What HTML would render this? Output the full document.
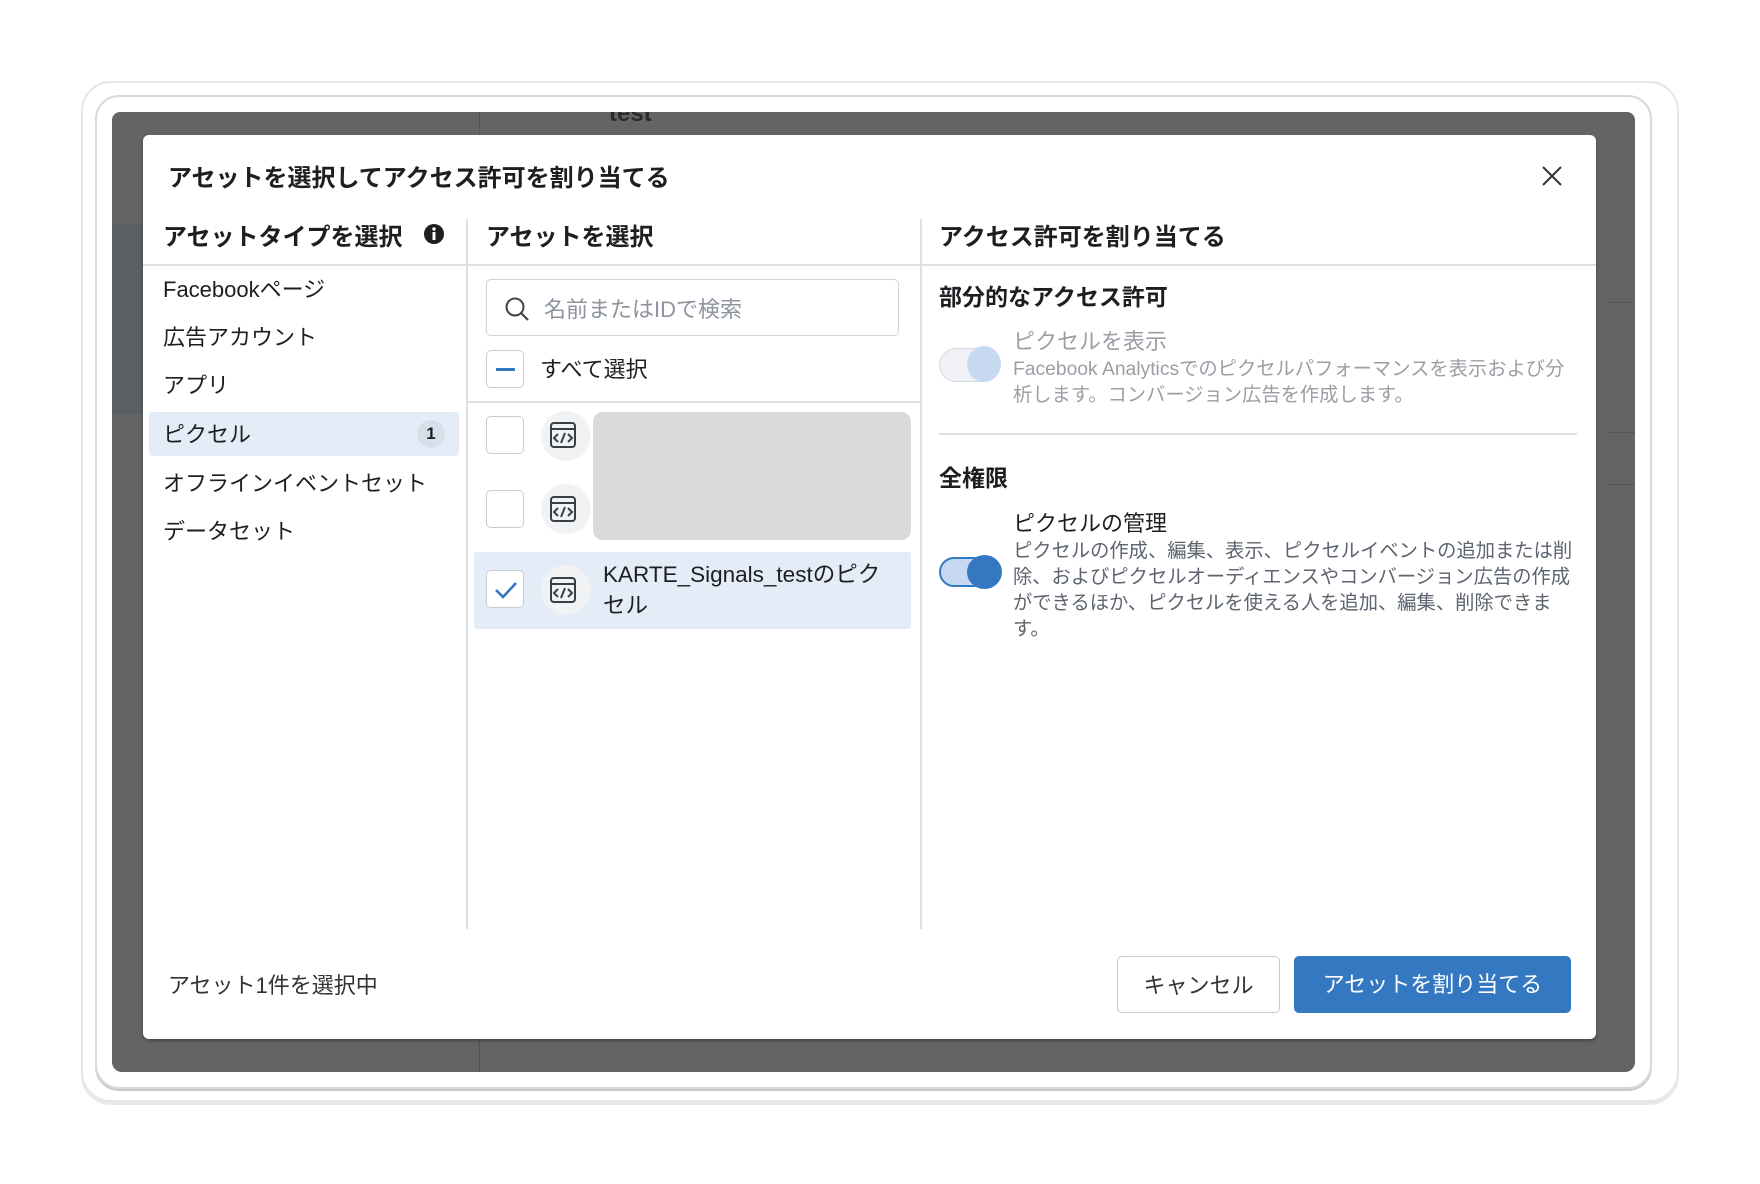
<!DOCTYPE html>
<html><head><meta charset="utf-8"><style>
*{box-sizing:border-box;margin:0;padding:0}
body{width:1760px;height:1184px;background:#fff;position:relative;overflow:hidden;font-family:"Liberation Sans","Noto Sans CJK JP",sans-serif;color:#1c1e21}
.a{position:absolute}
.f1{left:81px;top:81px;width:1598px;height:1021px;border:2px solid #e6e6e6;border-radius:30px;box-shadow:0 3px 0 #e8e8e8}
.f2{left:95px;top:95px;width:1557px;height:994px;border:2px solid #d8d8d8;border-radius:24px;box-shadow:0 2px 0 #c8c8c8}
.bd{left:112px;top:112px;width:1523px;height:960px;background:#646464;border-radius:8px 8px 10px 10px;overflow:hidden}
.modal{left:143px;top:135px;width:1453px;height:904px;background:#fff;border-radius:6px;box-shadow:0 2px 3px rgba(0,0,0,.3)}
.t{position:absolute;white-space:nowrap}
.h{font-weight:bold;font-size:24px}
.li{font-size:22px;left:20px}
.cb{position:absolute;width:38px;height:38px;border:1.5px solid #c9ccd1;border-radius:5px;background:#fff}
.ic{position:absolute;width:50px;height:50px;border-radius:50%;background:#f1f2f4}
.gray{color:#9a9ea5}
.d{font-size:19.3px;line-height:26px}
</style></head><body>
<div class="a f1"></div>
<div class="a f2"></div>
<div class="a bd">
  <div class="a" style="left:367px;top:0;width:1px;height:960px;background:#555"></div>
  <div class="a" style="left:0;top:112px;width:30px;height:190px;background:#5b5e63"></div>
  <div class="a" style="left:1495px;top:190px;width:28px;height:1px;background:#555"></div>
  <div class="a" style="left:1495px;top:320px;width:28px;height:1px;background:#555"></div>
  <div class="a" style="left:1495px;top:372px;width:28px;height:1px;background:#555"></div>
  <div class="t" style="left:497px;top:-12px;font-size:24px;font-weight:bold;color:#2a2a2a">test</div>
</div>
<div class="a modal">
  <div class="t h" style="left:25px;top:23px">アセットを選択してアクセス許可を割り当てる</div>
  <svg class="a" style="left:1397px;top:29px" width="24" height="24" viewBox="0 0 24 24"><path d="M3 3L21 21M21 3L3 21" stroke="#333" stroke-width="2" fill="none"/></svg>
  <div class="t h" style="left:20px;top:82px;font-size:24px">アセットタイプを選択</div>
  <svg class="a" style="left:281px;top:89px" width="20" height="20" viewBox="0 0 20 20"><circle cx="10" cy="10" r="10" fill="#1c1e21"/><rect x="8.5" y="8" width="3" height="8" fill="#fff"/><circle cx="10" cy="5" r="1.7" fill="#fff"/></svg>
  <div class="t h" style="left:343px;top:82px;font-size:24px">アセットを選択</div>
  <div class="t h" style="left:796px;top:82px;font-size:24px">アクセス許可を割り当てる</div>
  <div class="a" style="left:0;top:129px;width:1453px;height:2px;background:#dde0e5"></div>
  <div class="a" style="left:323px;top:84px;width:1.5px;height:710px;background:#dde0e5"></div>
  <div class="a" style="left:777px;top:84px;width:1.5px;height:710px;background:#dde0e5"></div>
  <div class="t li" style="top:137px">Facebookページ</div>
  <div class="t li" style="top:185px">広告アカウント</div>
  <div class="t li" style="top:233px">アプリ</div>
  <div class="a" style="left:6px;top:277px;width:310px;height:44px;background:#e4edf7;border-radius:4px"></div>
  <div class="t li" style="top:282px">ピクセル</div>
  <div class="a" style="left:274px;top:285px;width:28px;height:28px;border-radius:50%;background:#d6dfea;font-size:17px;font-weight:bold;text-align:center;line-height:28px">1</div>
  <div class="t li" style="top:331px">オフラインイベントセット</div>
  <div class="t li" style="top:379px">データセット</div>
  <div class="a" style="left:343px;top:144px;width:413px;height:57px;border:1.5px solid #cfd2d6;border-radius:5px"></div>
  <svg class="a" style="left:361px;top:161px" width="26" height="26" viewBox="0 0 26 26"><circle cx="11" cy="11" r="8.5" stroke="#444" stroke-width="2" fill="none"/><path d="M17 17L24 24" stroke="#444" stroke-width="2.2"/></svg>
  <div class="t" style="left:401px;top:157px;font-size:22px;color:#8d949e">名前またはIDで検索</div>
  <div class="cb" style="left:343px;top:215px"></div>
  <div class="a" style="left:353px;top:233px;width:19px;height:3px;background:#3578c2"></div>
  <div class="t" style="left:397px;top:217px;font-size:22px">すべて選択</div>
  <div class="a" style="left:323px;top:266px;width:455px;height:2px;background:#dde0e5"></div>
  <div class="cb" style="left:343px;top:281px"></div>
  <div class="ic" style="left:398px;top:276px"></div>
  <div class="cb" style="left:343px;top:355px"></div>
  <div class="ic" style="left:398px;top:349px"></div>
  <div class="a" style="left:450px;top:277px;width:318px;height:128px;background:#d9d9d9;border-radius:10px"></div>
  <div class="a" style="left:331px;top:417px;width:437px;height:77px;background:#e4edf7;border-radius:3px"></div>
  <div class="cb" style="left:343px;top:435px"></div>
  <svg class="a" style="left:351px;top:445px" width="24" height="20" viewBox="0 0 24 20"><path d="M2 10L9 17L22 3" stroke="#3578c2" stroke-width="2.6" fill="none"/></svg>
  <div class="ic" style="left:398px;top:430px"></div>
  <div class="t" style="left:460px;top:424px;font-size:22.5px;line-height:31px">KARTE_Signals_testのピク<br>セル</div>
  <div class="t h" style="left:796px;top:143px;font-size:23px">部分的なアクセス許可</div>
  <div class="a" style="left:796px;top:213px;width:61px;height:34px;border-radius:17px;background:#eff1f4;border:1.5px solid #d6dae0"></div>
  <div class="a" style="left:824px;top:211px;width:34px;height:36px;border-radius:50%;background:#c6d9f1"></div>
  <div class="t gray" style="left:870px;top:189px;font-size:22px">ピクセルを表示</div>
  <div class="t gray d" style="left:870px;top:222px">Facebook Analyticsでのピクセルパフォーマンスを表示および分<br>析します。コンバージョン広告を作成します。</div>
  <div class="a" style="left:796px;top:298px;width:638px;height:2px;background:#dde0e5"></div>
  <div class="t h" style="left:796px;top:324px;font-size:23px">全権限</div>
  <div class="a" style="left:796px;top:422px;width:61px;height:30px;border-radius:15px;background:#c6d9f1;border:2px solid #3578c2"></div>
  <div class="a" style="left:824px;top:420px;width:35px;height:34px;border-radius:50%;background:#3578c2"></div>
  <div class="t" style="left:870px;top:371px;font-size:22px">ピクセルの管理</div>
  <div class="t d" style="left:870px;top:404px;color:#5d6470">ピクセルの作成、編集、表示、ピクセルイベントの追加または削<br>除、およびピクセルオーディエンスやコンバージョン広告の作成<br>ができるほか、ピクセルを使える人を追加、編集、削除できま<br>す。</div>
  <div class="t" style="left:25px;top:833px;font-size:22px;color:#333">アセット1件を選択中</div>
  <div class="a" style="left:974px;top:821px;width:163px;height:57px;border:1.5px solid #c5cad2;border-radius:5px;font-size:22px;text-align:center;line-height:57px;color:#333">キャンセル</div>
  <div class="a" style="left:1151px;top:821px;width:277px;height:57px;background:#3578c2;border-radius:5px;font-size:22px;text-align:center;line-height:57px;color:#fff">アセットを割り当てる</div>
</div>
<svg class="a" style="left:549px;top:421px" width="28" height="28" viewBox="0 0 28 28" fill="none" stroke="#3a3f47" stroke-width="2"><rect x="2" y="2" width="24" height="24" rx="3"/><path d="M2 8H26"/><path d="M9 13L5 17L9 21M19 13L23 17L19 21M16 12L12 22"/></svg>
<svg class="a" style="left:549px;top:495px" width="28" height="28" viewBox="0 0 28 28" fill="none" stroke="#3a3f47" stroke-width="2"><rect x="2" y="2" width="24" height="24" rx="3"/><path d="M2 8H26"/><path d="M9 13L5 17L9 21M19 13L23 17L19 21M16 12L12 22"/></svg>
<svg class="a" style="left:549px;top:576px" width="28" height="28" viewBox="0 0 28 28" fill="none" stroke="#3a3f47" stroke-width="2"><rect x="2" y="2" width="24" height="24" rx="3"/><path d="M2 8H26"/><path d="M9 13L5 17L9 21M19 13L23 17L19 21M16 12L12 22"/></svg>
</body></html>
